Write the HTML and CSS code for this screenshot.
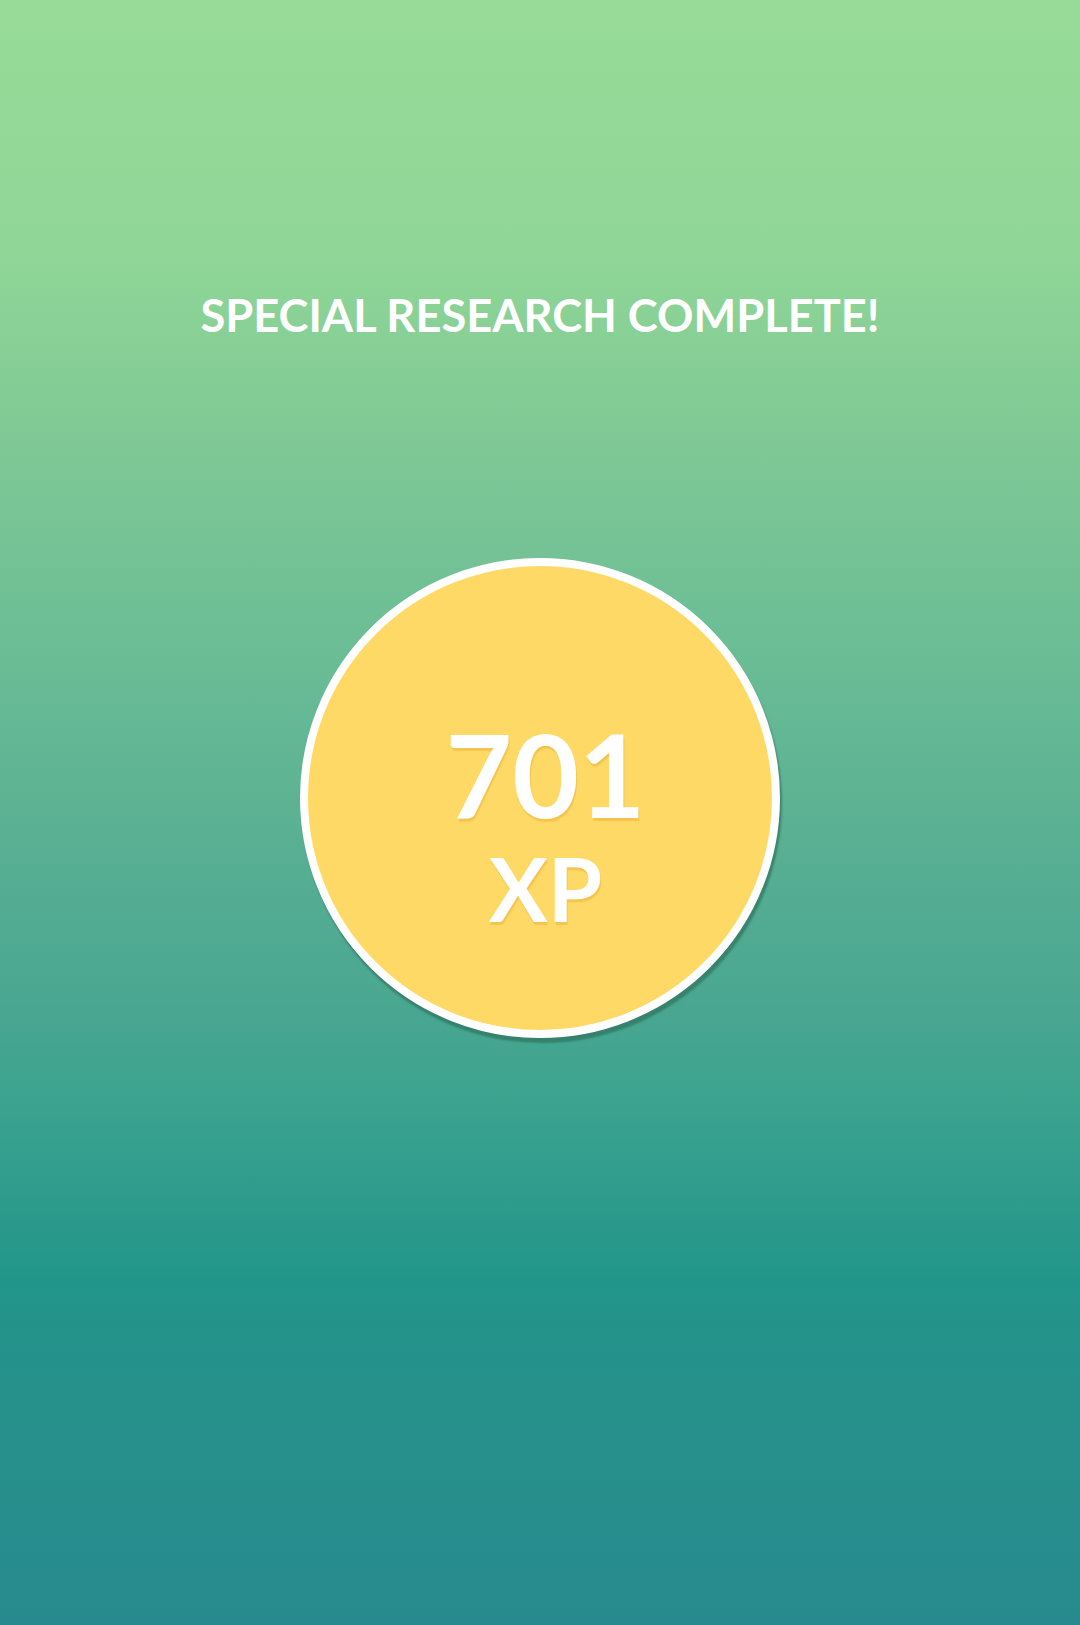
FILE: index.html
```html
<!DOCTYPE html>
<html lang="en">
<head>
<meta charset="utf-8">
<title>Special Research Complete</title>
<link rel="stylesheet" href="styles.css">
</head>
<body>
<main class="screen">
  <h1 class="title">SPECIAL RESEARCH COMPLETE!</h1>
  <div class="reward">
    <div class="reward-amount">701</div>
    <div class="reward-unit">XP</div>
  </div>
</main>
</body>
</html>
```
FILE: styles.css
```css
html, body {
  margin: 0;
  padding: 0;
}
body {
  width: 1080px;
  height: 1625px;
  overflow: hidden;
  font-family: Lato, "Open Sans", "Liberation Sans", sans-serif;
}
.screen {
  height: 1625px;
  display: flex;
  flex-direction: column;
  align-items: center;
  background: linear-gradient(to bottom,
    #98db98 0px,
    #90d697 250px,
    #7ec895 450px,
    #6bbd95 650px,
    #5bb193 820px,
    #4aa791 1000px,
    #3ca38f 1100px,
    #22958a 1280px,
    #26918b 1400px,
    #288a8e 1625px);
}
.title {
  margin: 293px 0 0;
  font-size: 45.2px;
  font-weight: 700;
  line-height: 44px;
  color: #ffffff;
  letter-spacing: 0;
  white-space: nowrap;
}
.reward {
  margin-top: 221px;
  width: 464px;
  height: 464px;
  box-sizing: content-box;
  border: 8.5px solid #ffffff;
  border-radius: 50%;
  background: #ffd966;
  box-shadow: 2px 5px 2px rgba(40, 100, 80, 0.55);
  display: flex;
  flex-direction: column;
  align-items: center;
  justify-content: flex-start;
  color: #ffffff;
  font-weight: 700;
  text-shadow: 1px 3px 1px rgba(220, 160, 40, 0.35);
}
.reward-amount {
  font-size: 115px;
  line-height: 110px;
  margin-top: 152px;
  margin-left: 11px;
}
.reward-unit {
  font-size: 88px;
  line-height: 90px;
  margin-top: 15px;
  margin-left: 11px;
}
```
